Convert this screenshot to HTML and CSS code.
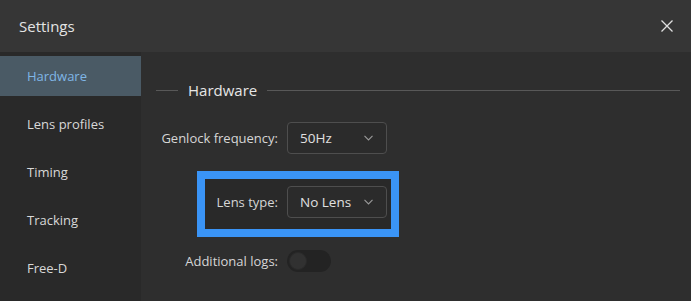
FILE: index.html
```html
<!DOCTYPE html>
<html lang="en">
<head>
  <meta charset="UTF-8" />
  <title>Settings</title>
  <link rel="stylesheet" href="styles.css">
</head>
<body>
  <div class="dialog">
    <!-- Title bar -->
    <header class="dialog-header">
      <h1>Settings</h1>
      <button class="close-btn" aria-label="Close">
        <svg width="12" height="12" viewBox="0 0 12 12"><path d="M0.5 0.5 L11.5 11.5 M11.5 0.5 L0.5 11.5" stroke="#e0e0e0" stroke-width="1.3" fill="none"/></svg>
      </button>
    </header>

    <div class="dialog-body">
      <!-- Side menu -->
      <nav class="sidebar">
        <div class="nav-item active">Hardware</div>
        <div class="nav-item">Lens profiles</div>
        <div class="nav-item">Timing</div>
        <div class="nav-item">Tracking</div>
        <div class="nav-item">Free-D</div>
      </nav>

      <!-- Content -->
      <main class="content">
        <div class="section-title">
          <span class="line short"></span>
          <h2>Hardware</h2>
          <span class="line"></span>
        </div>

        <div class="form">
          <label class="form-label">Genlock frequency:</label>
          <div class="select">
            <span>50Hz</span>
            <svg class="chevron" width="9" height="6" viewBox="0 0 9 6"><path d="M0.5 0.8 L4.5 5 L8.5 0.8" stroke="#9a9a9a" stroke-width="1.1" fill="none"/></svg>
          </div>

          <label class="form-label">Lens type:</label>
          <div class="select">
            <span>No Lens</span>
            <svg class="chevron" width="9" height="6" viewBox="0 0 9 6"><path d="M0.5 0.8 L4.5 5 L8.5 0.8" stroke="#9a9a9a" stroke-width="1.1" fill="none"/></svg>
          </div>

          <label class="form-label">Additional logs:</label>
          <div class="toggle"><span class="knob"></span></div>
        </div>

        <!-- Highlight marker -->
        <div class="highlight"></div>
      </main>
    </div>
  </div>
</body>
</html>
```

FILE: styles.css
```css
* {
  box-sizing: border-box;
  margin: 0;
  padding: 0;
}

body {
  font-family: 'Open Sans', 'Noto Sans', sans-serif;
  background: #2e2e2e;
  color: #dcdcdc;
}

.dialog {
  width: 691px;
  height: 301px;
  display: flex;
  flex-direction: column;
  overflow: hidden;
}

.dialog-header {
  height: 52px;
  background: #363636;
  display: flex;
  align-items: center;
  justify-content: space-between;
  padding: 0 18px 0 19px;
}

.dialog-header h1 {
  font-size: 15px;
  font-weight: normal;
  color: #e4e4e4;
}

.close-btn {
  background: none;
  border: none;
  display: flex;
  cursor: pointer;
}

.dialog-body {
  flex: 1;
  display: flex;
}

.sidebar {
  width: 141px;
  background: #292929;
  padding-top: 4px;
}

.nav-item {
  height: 40px;
  margin-bottom: 8px;
  padding-left: 27px;
  display: flex;
  align-items: center;
  font-size: 13px;
  color: #d8d8d8;
}

.nav-item.active {
  background: #4a5a65;
  color: #7fb6e6;
}

.content {
  flex: 1;
  position: relative;
  background: #2e2e2e;
  padding: 28px 11px 0 15px;
}

.section-title {
  display: flex;
  align-items: center;
  height: 20px;
  gap: 10px;
}

.section-title h2 {
  font-size: 15px;
  font-weight: normal;
  color: #e6e6e6;
}

.section-title .line {
  flex: 1;
  height: 1px;
  background: #585858;
}

.section-title .line.short {
  flex: 0 0 22px;
}

.form {
  margin-top: 22px;
  display: grid;
  grid-template-columns: 122px 100px;
  column-gap: 9px;
  row-gap: 32px;
  align-items: center;
  position: relative;
  z-index: 1;
}

.form-label {
  font-size: 13px;
  color: #d6d6d6;
  text-align: right;
  white-space: nowrap;
}

.select {
  height: 32px;
  border: 1px solid #4e4e4e;
  border-radius: 4px;
  background: #2b2b2b;
  display: flex;
  align-items: center;
  justify-content: space-between;
  padding: 0 13px 0 12px;
  font-size: 13.5px;
  color: #e0e0e0;
}

.toggle {
  width: 44px;
  height: 22px;
  border-radius: 11px;
  background: #232323;
  padding: 2px;
}

.toggle .knob {
  display: block;
  width: 18px;
  height: 18px;
  border-radius: 50%;
  background: #313131;
  border: 1px solid #2a2a2a;
}

.highlight {
  position: absolute;
  left: 56px;
  top: 119px;
  width: 202px;
  height: 66px;
  border: 8px solid #3a94f6;
  background: #292929;
}
```
